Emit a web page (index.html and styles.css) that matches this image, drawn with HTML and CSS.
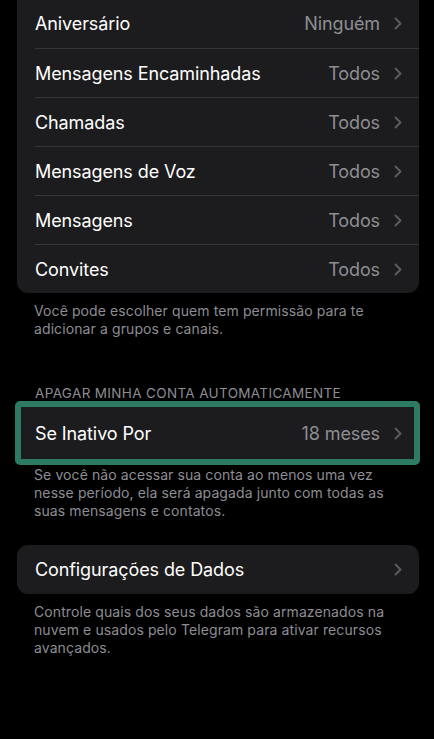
FILE: index.html
```html
<!DOCTYPE html>
<html lang="pt-BR">
<head>
<meta charset="utf-8">
<title>Privacidade</title>
<link rel="stylesheet" href="styles.css">
</head>
<body>
<div class="page">
  <div class="card">
    <div class="row"><div class="row-inner"><span class="label">Aniversário</span><span class="value">Ninguém</span><svg class="chev" width="8" height="13" viewBox="0 0 8 13"><polyline points="1.5,1.5 6.5,6.5 1.5,11.5"/></svg></div></div>
    <div class="row"><div class="row-inner"><span class="label">Mensagens Encaminhadas</span><span class="value">Todos</span><svg class="chev" width="8" height="13" viewBox="0 0 8 13"><polyline points="1.5,1.5 6.5,6.5 1.5,11.5"/></svg></div></div>
    <div class="row"><div class="row-inner"><span class="label">Chamadas</span><span class="value">Todos</span><svg class="chev" width="8" height="13" viewBox="0 0 8 13"><polyline points="1.5,1.5 6.5,6.5 1.5,11.5"/></svg></div></div>
    <div class="row"><div class="row-inner"><span class="label">Mensagens de Voz</span><span class="value">Todos</span><svg class="chev" width="8" height="13" viewBox="0 0 8 13"><polyline points="1.5,1.5 6.5,6.5 1.5,11.5"/></svg></div></div>
    <div class="row"><div class="row-inner"><span class="label">Mensagens</span><span class="value">Todos</span><svg class="chev" width="8" height="13" viewBox="0 0 8 13"><polyline points="1.5,1.5 6.5,6.5 1.5,11.5"/></svg></div></div>
    <div class="row"><div class="row-inner last"><span class="label">Convites</span><span class="value">Todos</span><svg class="chev" width="8" height="13" viewBox="0 0 8 13"><polyline points="1.5,1.5 6.5,6.5 1.5,11.5"/></svg></div></div>
  </div>
  <p class="footer f1">Você pode escolher quem tem permissão para te<br>adicionar a grupos e canais.</p>

  <div class="header">APAGAR MINHA CONTA AUTOMATICAMENTE</div>
  <div class="highlight">
    <div class="hl-row"><span class="label">Se Inativo Por</span><span class="value">18 meses</span><svg class="chev" width="8" height="13" viewBox="0 0 8 13"><polyline points="1.5,1.5 6.5,6.5 1.5,11.5"/></svg></div>
  </div>
  <p class="footer f2">Se você não acessar sua conta ao menos uma vez<br>nesse período, ela será apagada junto com todas as<br>suas mensagens e contatos.</p>

  <div class="card card3">
    <div class="row"><div class="row-inner last"><span class="label">Configurações de Dados</span><span class="value"></span><svg class="chev" width="8" height="13" viewBox="0 0 8 13"><polyline points="1.5,1.5 6.5,6.5 1.5,11.5"/></svg></div></div>
  </div>
  <p class="footer f3">Controle quais dos seus dados são armazenados na<br>nuvem e usados pelo Telegram para ativar recursos<br>avançados.</p>
</div>
</body>
</html>
```

FILE: styles.css
```css
html, body {
  margin: 0;
  padding: 0;
  background: #000;
}
body {
  font-family: Inter, "Noto Sans", sans-serif;
  color: #fff;
  width: 434px;
  height: 739px;
  overflow: hidden;
}
.page {
  display: flex;
  flex-direction: column;
}
.card {
  margin: -1px 15px 0 17px;
  background: #1c1c1e;
  border-radius: 0 0 11px 11px;
}
.card3 {
  margin-top: 25px;
  border-radius: 11px;
}
.row {
  padding-left: 18px;
}
.row-inner {
  display: flex;
  align-items: center;
  height: 48px;
  padding-right: 17px;
  border-bottom: 1px solid #353538;
}
.row-inner.last {
  border-bottom: none;
}
.card:first-child .row:first-child .row-inner {
  height: 49px;
}
.card3 .row-inner {
  height: 49px;
}
.label {
  flex: 1;
  font-size: 18px;
  letter-spacing: -0.1px;
  color: #fff;
  white-space: nowrap;
}
.value {
  font-size: 18px;
  letter-spacing: -0.1px;
  color: #8e8e93;
  margin-right: 14px;
  white-space: nowrap;
}
.chev {
  display: block;
  flex: none;
}
.chev polyline {
  fill: none;
  stroke: #5a5a5f;
  stroke-width: 2;
  stroke-linecap: round;
  stroke-linejoin: round;
}
.footer {
  margin: 0;
  padding: 0 20px 0 34px;
  font-size: 14px;
  line-height: 18px;
  letter-spacing: 0.1px;
  color: #8d8d93;
  white-space: nowrap;
}
.f1 { margin-top: 9px; }
.f2 { margin-top: 1px; }
.f3 { margin-top: 9px; }
.header {
  margin-top: 47px;
  padding-left: 35px;
  font-size: 13.5px;
  line-height: 16px;
  color: #8d8d93;
  letter-spacing: 0.35px;
}
.highlight {
  margin: 0 14px 0 15px;
  border: 6px solid #2e7b65;
  border-radius: 5px;
  background: #1c1c1e;
}
.hl-row {
  display: flex;
  align-items: center;
  height: 52px;
  padding: 0 12px 0 14px;
}
```
